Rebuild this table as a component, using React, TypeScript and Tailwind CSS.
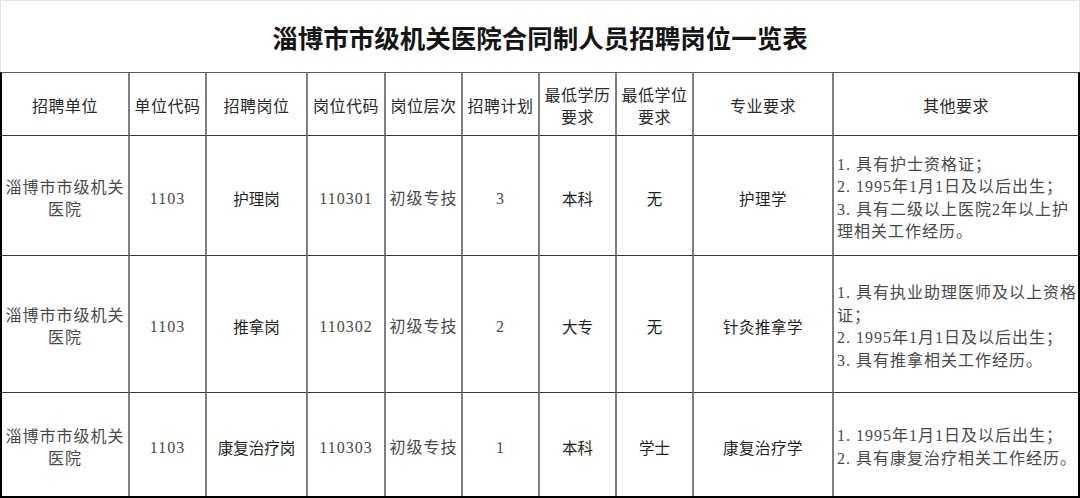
import React from "react";

/* ------------------ Table data ------------------ */
const headers: string[][] = [
  ["招聘单位"],
  ["单位代码"],
  ["招聘岗位"],
  ["岗位代码"],
  ["岗位层次"],
  ["招聘计划"],
  ["最低学历", "要求"],
  ["最低学位", "要求"],
  ["专业要求"],
  ["其他要求"],
];

const rows = [
  {
    post: "护理岗",
    code: "110301",
    count: "3",
    edu: "本科",
    degree: "无",
    major: "护理学",
    other: [
      "1. 具有护士资格证；",
      "2. 1995年1月1日及以后出生；",
      "3. 具有二级以上医院2年以上护",
      "理相关工作经历。",
    ],
  },
  {
    post: "推拿岗",
    code: "110302",
    count: "2",
    edu: "大专",
    degree: "无",
    major: "针灸推拿学",
    other: [
      "1. 具有执业助理医师及以上资格",
      "证；",
      "2. 1995年1月1日及以后出生；",
      "3. 具有推拿相关工作经历。",
    ],
  },
  {
    post: "康复治疗岗",
    code: "110303",
    count: "1",
    edu: "本科",
    degree: "学士",
    major: "康复治疗学",
    other: ["1. 1995年1月1日及以后出生；", "2. 具有康复治疗相关工作经历。"],
  },
];

const serif =
  "font-['Liberation_Serif','Noto_Sans_CJK_SC',serif] text-[16px] tracking-[1px] text-[#4a4a4a]";
const sans = "font-['Noto_Sans_CJK_SC',sans-serif] text-[15.5px] text-[#1f1f1f]";

function Cell({
  children,
  last,
  bottom,
  className = "",
}: {
  children: React.ReactNode;
  last?: boolean;
  bottom?: boolean;
  className?: string;
}) {
  return (
    <div
      className={`flex items-center ${last ? "" : "border-r-2 border-r-[#7f7f7f]"} ${
        bottom ? "" : "border-b border-b-[#353535]"
      } ${className}`}
    >
      {children}
    </div>
  );
}

export default function App() {
  return (
    <div className="w-[1080px] h-[498px] bg-white overflow-hidden">
      {/* ---------------- Title ---------------- */}
      <div className="h-[72px] border-t border-x border-[#e4e4e4] flex items-center justify-center">
        <h1 className="font-['Noto_Sans_CJK_SC',sans-serif] font-bold text-[25.5px] leading-none text-[#151515]">
          淄博市市级机关医院合同制人员招聘岗位一览表
        </h1>
      </div>

      {/* ---------------- Table ---------------- */}
      <div className="grid grid-cols-[128px_77px_101px_78px_77px_77px_77px_77px_140px_1fr] grid-rows-[63px_120px_137px_103px] border-t border-t-[#5e5e5e] border-x-2 border-x-black border-b-2 border-b-black">
        {headers.map((h, i) => (
          <Cell key={i} last={i === headers.length - 1} className="justify-center pt-[2px]">
            <div className="font-['Noto_Sans_CJK_SC',sans-serif] text-[16px] tracking-[0.5px] leading-[22px] text-[#2a2a2a] text-center whitespace-nowrap">
              {h.map((line) => (
                <div key={line}>{line}</div>
              ))}
            </div>
          </Cell>
        ))}

        {rows.map((r, ri) => {
          const bottom = ri === rows.length - 1;
          return (
            <React.Fragment key={r.code}>
              <Cell bottom={bottom} className="justify-center pt-[6px]">
                <div className={`${serif} leading-[22px] text-center whitespace-nowrap`}>
                  <div>淄博市市级机关</div>
                  <div>医院</div>
                </div>
              </Cell>
              <Cell bottom={bottom} className={`justify-center pt-[6px] ${serif}`}>
                1103
              </Cell>
              <Cell bottom={bottom} className={`justify-center pt-[6px] ${sans}`}>
                {r.post}
              </Cell>
              <Cell bottom={bottom} className={`justify-center pt-[6px] ${serif}`}>
                {r.code}
              </Cell>
              <Cell bottom={bottom} className={`justify-center pt-[6px] ${serif}`}>
                初级专技
              </Cell>
              <Cell bottom={bottom} className={`justify-center pt-[6px] ${serif}`}>
                {r.count}
              </Cell>
              <Cell bottom={bottom} className={`justify-center pt-[6px] ${sans}`}>
                {r.edu}
              </Cell>
              <Cell bottom={bottom} className={`justify-center pt-[6px] ${sans}`}>
                {r.degree}
              </Cell>
              <Cell bottom={bottom} className={`justify-center pt-[6px] ${sans} tracking-[0.5px]`}>
                {r.major}
              </Cell>
              <Cell bottom={bottom} last className="pl-[3px] pt-[6px]">
                <div className={`${serif} leading-[22.5px] whitespace-nowrap`}>
                  {r.other.map((line) => (
                    <div key={line}>{line}</div>
                  ))}
                </div>
              </Cell>
            </React.Fragment>
          );
        })}
      </div>
    </div>
  );
}
